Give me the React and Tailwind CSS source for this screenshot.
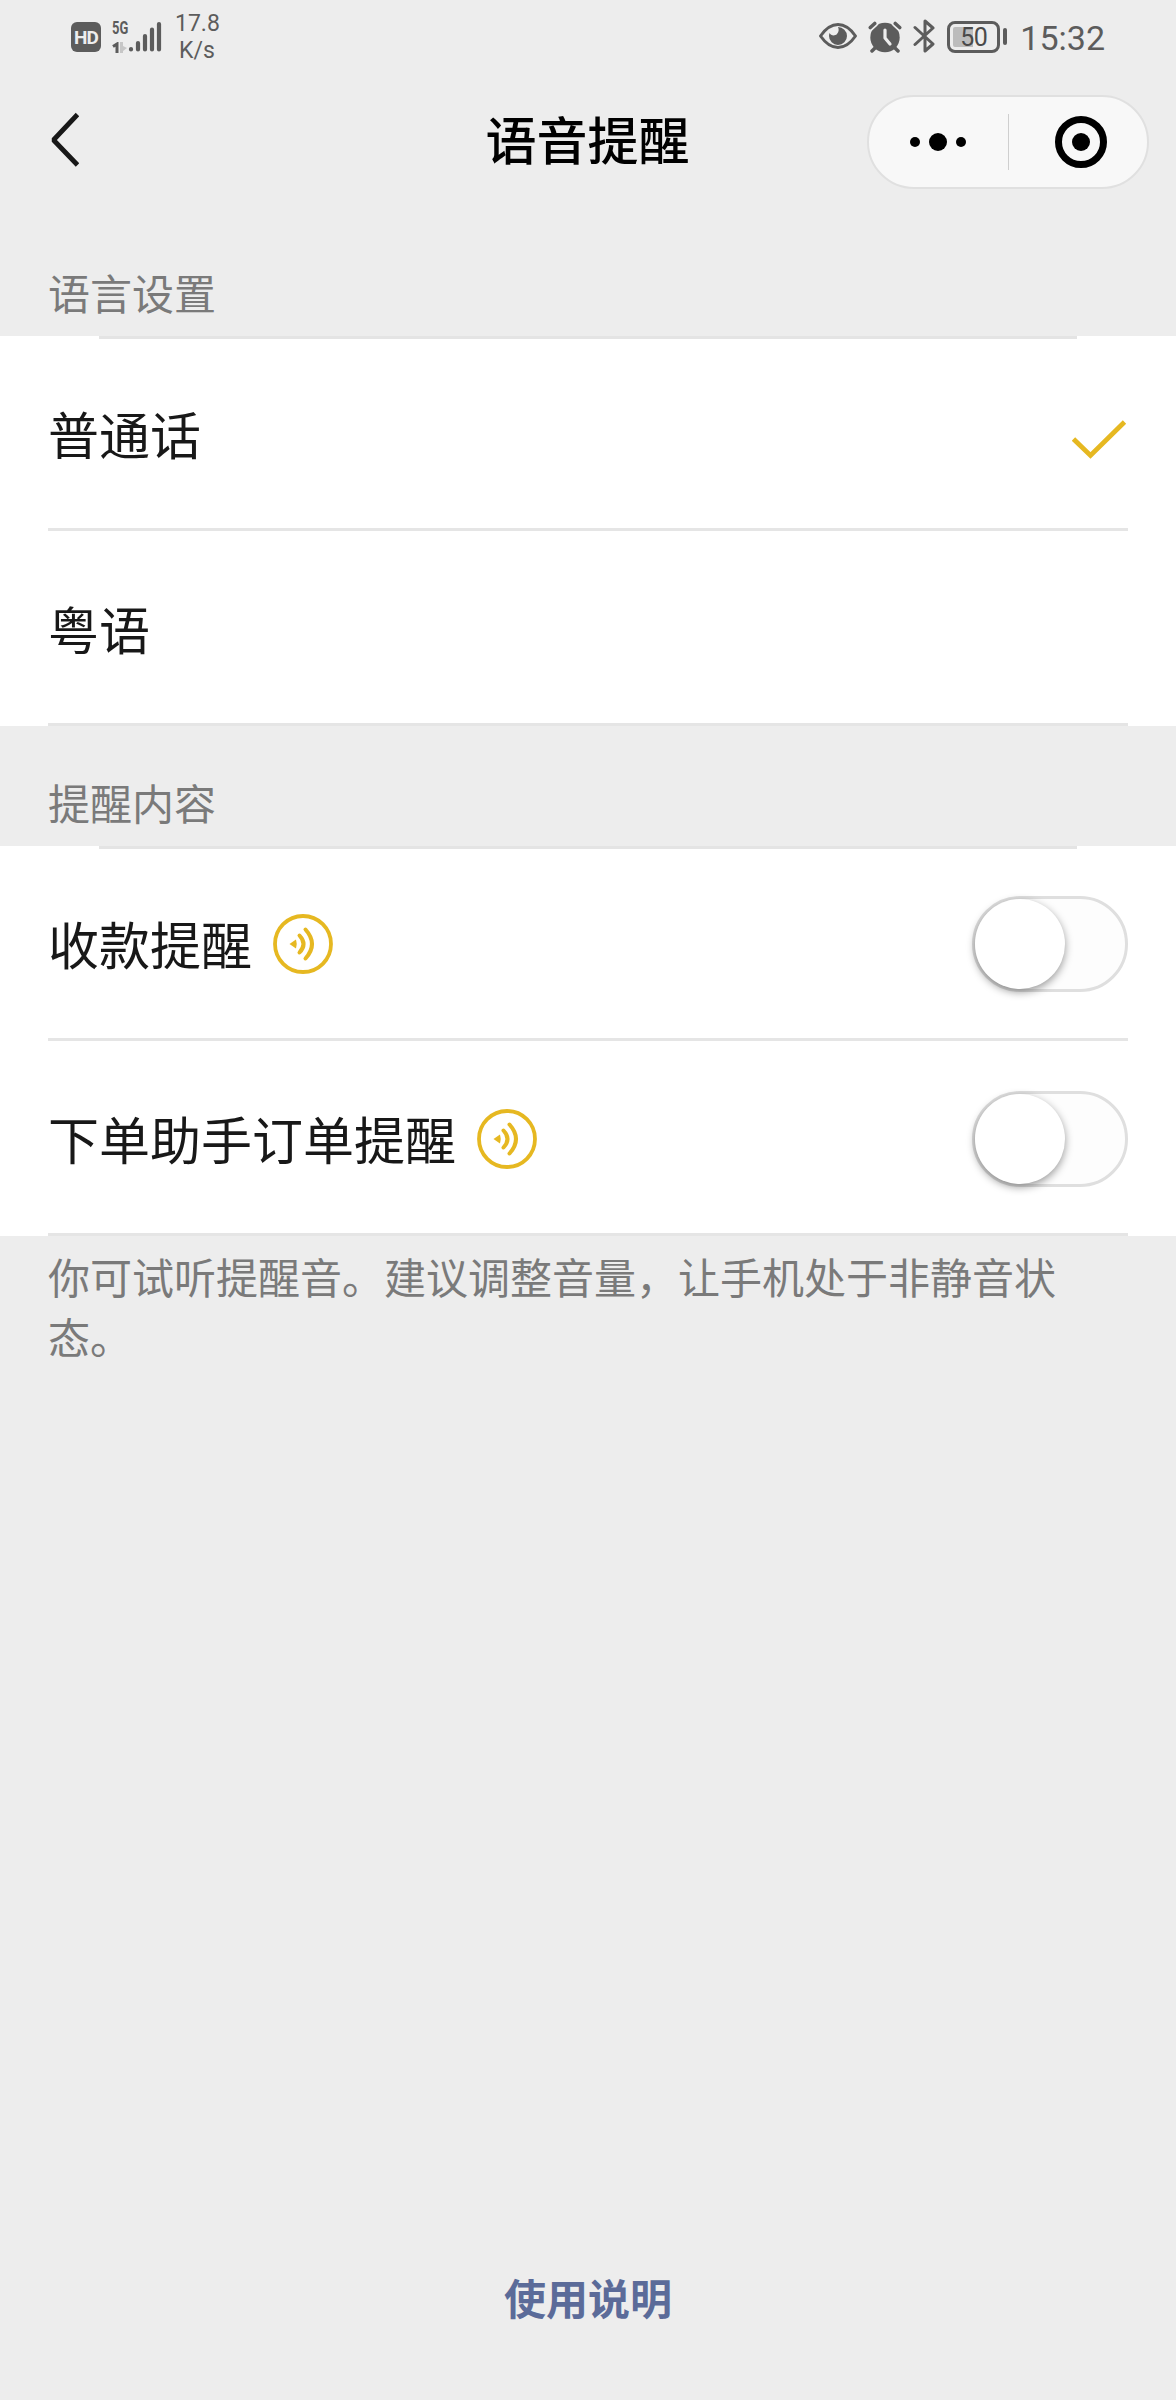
import { useState } from 'react';

const LANGUAGES = [
  { id: 'mandarin', label: '普通话' },
  { id: 'cantonese', label: '粤语' },
];

const REMINDERS = [
  { id: 'payment', label: '收款提醒' },
  { id: 'order', label: '下单助手订单提醒' },
];

function StatusBar() {
  return (
    <div className="h-[72px] pl-[71px] pr-[71px] flex items-center justify-between font-[Roboto,sans-serif] text-[#5c5c5c]">
      <div className="flex items-center">
        <div className="w-[30px] h-[30px] mt-[2px] rounded-md bg-[#5c5c5c] text-[#ededed] text-[19px] leading-none font-bold flex items-center justify-center tracking-[-1px]">
          HD
        </div>
        <div className="ml-[11px] mt-[2px] h-8 w-[17px] flex flex-col justify-between">
          <span className="h-[14px] w-[22px] text-[18px] leading-[14px] font-bold inline-block origin-left scale-x-[0.72]">5G</span>
          <svg width="16" height="11" viewBox="0 0 16 11">
            <path d="M1 4.5 5 2v9" fill="none" stroke="#5c5c5c" strokeWidth="3" />
            <path d="M8 0h3v4l4 2-4 3v2H8z" fill="#c6c6c6" />
          </svg>
        </div>
        <svg width="34" height="32" viewBox="0 0 34 32" className="-ml-px mt-px" stroke="#5c5c5c" strokeWidth="4.2" strokeLinecap="round">
          <path d="M3 28v.4M10 22v6.500M17 15v13.500M24 8.500v20M31 3v25.500" />
        </svg>
        <div className="ml-[13px] pt-[2px] w-11 text-center text-[23px] leading-[27px]">
          <div>17.8</div>
          <div>K/s</div>
        </div>
      </div>
      <div className="flex items-center">
        <svg width="40" height="28" viewBox="0 0 40 28" fill="none">
          <path d="M2.500 14C8 6 14 2.500 20 2.500S32 6 37.500 14C32 22 26 25.500 20 25.500S8 22 2.500 14z" stroke="#5c5c5c" strokeWidth="3" strokeLinejoin="round" />
          <path d="M20 5a9 9 0 1 1-9 9c0-1 .2-2 .6-3 1 2.500 5 3.500 7.400 1 2-2 2-5 1-7z" fill="#5c5c5c" />
        </svg>
        <svg width="34" height="32" viewBox="0 0 34 32" className="ml-[10px] mt-px">
          <circle cx="17" cy="16.500" r="14.700" fill="#5c5c5c" />
          <path d="M8 26l-4 4M26 26l4 4" stroke="#5c5c5c" strokeWidth="3.500" strokeLinecap="round" />
          <path d="M2.300 6.500l4.400-4M31.700 6.500l-4.400-4" stroke="#ededed" strokeWidth="7" strokeLinecap="round" />
          <path d="M2.300 6.500l4.400-4M31.700 6.500l-4.400-4" stroke="#5c5c5c" strokeWidth="3.600" strokeLinecap="round" />
          <path d="M17 9v8l5 6" fill="none" stroke="#ededed" strokeWidth="3.200" strokeLinecap="round" strokeLinejoin="round" />
        </svg>
        <svg width="22" height="34" viewBox="0 0 22 34" className="ml-[11px]" fill="none" stroke="#5c5c5c" strokeWidth="3" strokeLinecap="round" strokeLinejoin="round">
          <path d="M2 8.500 20 25 12 32V2l8 7L2 25.500" />
        </svg>
        <div className="ml-[12px] mt-px w-[53px] h-[32px] border-[3px] border-[#5c5c5c] rounded-lg p-[3px]">
          <div className="h-full rounded-[2px] bg-[linear-gradient(to_right,#bcbcbc_50%,transparent_50%)] text-[25px] leading-[21px] text-center tracking-[-0.500px] text-[#4a4a4a]">
            50
          </div>
        </div>
        <div className="ml-[3px] w-[4px] h-[17px] rounded-sm bg-[#5c5c5c]" />
        <div className="ml-[13px] text-[34px] leading-none pt-[3px]">15:32</div>
      </div>
    </div>
  );
}

function NavBar() {
  return (
    <header className="h-[140px] pl-[47px] pr-[27px] pt-[23px] grid grid-cols-[1fr_auto_1fr] items-start">
      <button className="w-8 h-[60px] mt-[14px]" aria-label="返回">
        <svg width="32" height="60" viewBox="0 0 32 60" fill="none" stroke="#181818" strokeWidth="4.800">
          <path d="M30.500 5.500 6.500 31l24 25" strokeLinejoin="bevel" />
        </svg>
      </button>
      <h1 className="text-[51px] leading-[87px] font-medium text-black pr-[21px]">语音提醒</h1>
      <div className="justify-self-end w-[282px] h-[94px] rounded-full border-2 border-[#e0e0e0] bg-[#f8f8f8] flex items-center">
        <button className="w-[139px] h-14 pr-px flex items-center justify-center gap-[9px]" aria-label="更多">
          <span className="w-[10px] h-[10px] rounded-full bg-black" />
          <span className="w-[18px] h-[18px] rounded-full bg-black" />
          <span className="w-[10px] h-[10px] rounded-full bg-black" />
        </button>
        <div className="w-px h-14 bg-[#cfcfcf]" />
        <button className="flex-1 flex items-center justify-center pl-[6px]" aria-label="关闭">
          <span className="w-[52px] h-[52px] rounded-full border-[7px] border-black flex items-center justify-center">
            <span className="w-[18px] h-[18px] rounded-full bg-black" />
          </span>
        </button>
      </div>
    </header>
  );
}

function Section({ title, children }) {
  return (
    <section>
      <h2 className="h-[120px] px-12 pt-[46px] text-[42px] leading-[60px] text-[#7a7a7a]">{title}</h2>
      <div className="bg-white relative">
        <div className="absolute top-0 left-[99px] right-[99px] h-[3px] bg-[#e4e4e4]" />
        {children}
      </div>
    </section>
  );
}

function Row({ label, icon, onClick, children }) {
  return (
    <div
      onClick={onClick}
      className="mx-12 h-[195px] pt-[3px] border-b-[3px] border-[#e5e5e5] flex items-center text-[51px] leading-[72px] text-[#181818]"
    >
      <span className="pb-px">{label}</span>
      {icon}
      <div className="ml-auto">{children}</div>
    </div>
  );
}

function SoundIcon() {
  return (
    <svg width="60" height="60" viewBox="0 0 60 60" className="ml-[21px]" fill="none" stroke="#e6b821">
      <circle cx="30" cy="30" r="28" strokeWidth="3.800" />
      <path d="M16.500 30l6.500-4.500q1.500 4.500 0 9z" fill="#e6b821" stroke="none" />
      <path d="M26.500 21.500q8 8.500 0 17M32.500 15.500q13 14.500 0 29" strokeWidth="4" strokeLinecap="round" />
    </svg>
  );
}

function Toggle({ checked, onChange }) {
  return (
    <button
      role="switch"
      aria-checked={checked}
      onClick={() => onChange(!checked)}
      className={`block w-[156px] h-24 rounded-full border-[3px] ${
        checked ? 'border-[#e6b821] bg-[#e6b821] pl-[60px]' : 'border-[#dfdfdf] bg-[#fdfdfd]'
      }`}
    >
      <span className="block w-[90px] h-[90px] rounded-full bg-white shadow-[0_3px_9px_rgba(0,0,0,0.4)]" />
    </button>
  );
}

export default function App() {
  const [language, setLanguage] = useState('mandarin');
  const [enabled, setEnabled] = useState({ payment: false, order: false });

  return (
    <div className="w-full h-[2400px] bg-[#ededed] flex flex-col font-['Noto_Sans_CJK_SC',sans-serif]">
      <StatusBar />
      <NavBar />
      <main className="pt-1">
        <Section title="语言设置">
          {LANGUAGES.map((lang) => (
            <Row key={lang.id} label={lang.label} onClick={() => setLanguage(lang.id)}>
              {language === lang.id && (
                <svg width="56" height="40" viewBox="0 0 56 40" className="mt-[11px]" fill="none" stroke="#e6b821" strokeWidth="4.800">
                  <path d="M1.500 20l17 16.500L52.500 3" />
                </svg>
              )}
            </Row>
          ))}
        </Section>
        <Section title="提醒内容">
          {REMINDERS.map((item) => (
            <Row key={item.id} label={item.label} icon={<SoundIcon />}>
              <Toggle
                checked={enabled[item.id]}
                onChange={(value) => setEnabled({ ...enabled, [item.id]: value })}
              />
            </Row>
          ))}
        </Section>
        <p className="px-12 pt-[10px] text-[42px] leading-[60px] text-[#7a7a7a]">
          你可试听提醒音。建议调整音量，让手机处于非静音状态。
        </p>
      </main>
      <footer className="mt-auto pb-[73px] text-center">
        <a className="text-[42px] leading-[60px] font-bold text-[#5b6b99]">使用说明</a>
      </footer>
    </div>
  );
}
